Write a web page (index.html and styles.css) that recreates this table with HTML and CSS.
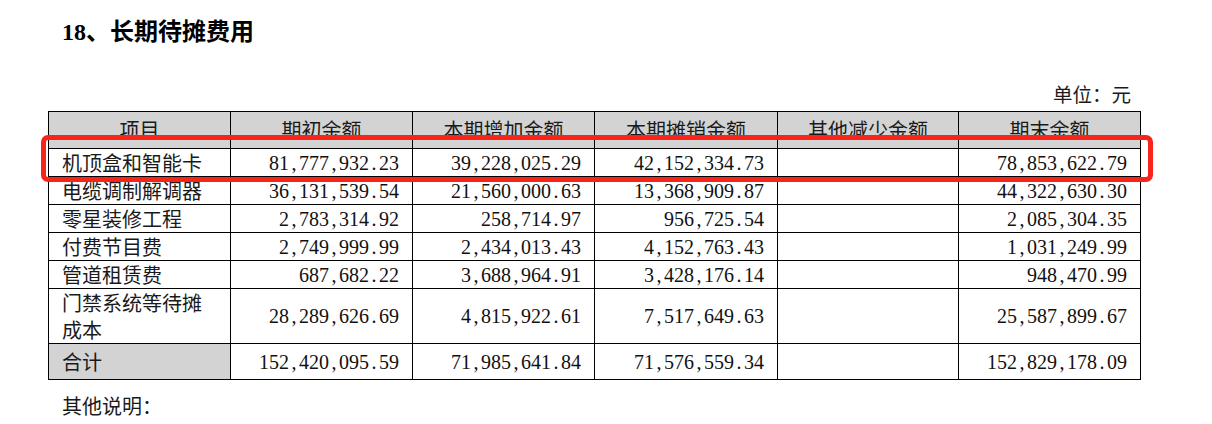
FILE: index.html
```html
<!DOCTYPE html>
<html lang="zh">
<head>
<meta charset="utf-8">
<link rel="stylesheet" href="styles.css">
</head>
<body>
<div class="page">
  <h1 class="title"><span class="lat">18</span>、长期待摊费用</h1>
  <div class="unit">单位：元</div>
  <table class="grid">
    <colgroup>
      <col class="c1"><col class="c2"><col class="c3"><col class="c4"><col class="c5"><col class="c6">
    </colgroup>
    <tr class="head">
      <th>项目</th><th>期初余额</th><th>本期增加金额</th><th>本期摊销金额</th><th>其他减少金额</th><th>期末余额</th>
    </tr>
    <tr class="r27">
      <td class="name">机顶盒和智能卡</td>
      <td class="num">81<span class="p">,</span>777<span class="p">,</span>932<span class="p">.</span>23</td>
      <td class="num">39<span class="p">,</span>228<span class="p">,</span>025<span class="p">.</span>29</td>
      <td class="num">42<span class="p">,</span>152<span class="p">,</span>334<span class="p">.</span>73</td>
      <td class="num"></td>
      <td class="num">78<span class="p">,</span>853<span class="p">,</span>622<span class="p">.</span>79</td>
    </tr>
    <tr class="r28">
      <td class="name">电缆调制解调器</td>
      <td class="num">36<span class="p">,</span>131<span class="p">,</span>539<span class="p">.</span>54</td>
      <td class="num">21<span class="p">,</span>560<span class="p">,</span>000<span class="p">.</span>63</td>
      <td class="num">13<span class="p">,</span>368<span class="p">,</span>909<span class="p">.</span>87</td>
      <td class="num"></td>
      <td class="num">44<span class="p">,</span>322<span class="p">,</span>630<span class="p">.</span>30</td>
    </tr>
    <tr class="r28">
      <td class="name">零星装修工程</td>
      <td class="num">2<span class="p">,</span>783<span class="p">,</span>314<span class="p">.</span>92</td>
      <td class="num">258<span class="p">,</span>714<span class="p">.</span>97</td>
      <td class="num">956<span class="p">,</span>725<span class="p">.</span>54</td>
      <td class="num"></td>
      <td class="num">2<span class="p">,</span>085<span class="p">,</span>304<span class="p">.</span>35</td>
    </tr>
    <tr class="r28">
      <td class="name">付费节目费</td>
      <td class="num">2<span class="p">,</span>749<span class="p">,</span>999<span class="p">.</span>99</td>
      <td class="num">2<span class="p">,</span>434<span class="p">,</span>013<span class="p">.</span>43</td>
      <td class="num">4<span class="p">,</span>152<span class="p">,</span>763<span class="p">.</span>43</td>
      <td class="num"></td>
      <td class="num">1<span class="p">,</span>031<span class="p">,</span>249<span class="p">.</span>99</td>
    </tr>
    <tr class="r28">
      <td class="name">管道租赁费</td>
      <td class="num">687<span class="p">,</span>682<span class="p">.</span>22</td>
      <td class="num">3<span class="p">,</span>688<span class="p">,</span>964<span class="p">.</span>91</td>
      <td class="num">3<span class="p">,</span>428<span class="p">,</span>176<span class="p">.</span>14</td>
      <td class="num"></td>
      <td class="num">948<span class="p">,</span>470<span class="p">.</span>99</td>
    </tr>
    <tr class="r54">
      <td class="name">门禁系统等待摊<br>成本</td>
      <td class="num">28<span class="p">,</span>289<span class="p">,</span>626<span class="p">.</span>69</td>
      <td class="num">4<span class="p">,</span>815<span class="p">,</span>922<span class="p">.</span>61</td>
      <td class="num">7<span class="p">,</span>517<span class="p">,</span>649<span class="p">.</span>63</td>
      <td class="num"></td>
      <td class="num">25<span class="p">,</span>587<span class="p">,</span>899<span class="p">.</span>67</td>
    </tr>
    <tr class="total">
      <td class="name shade">合计</td>
      <td class="num">152<span class="p">,</span>420<span class="p">,</span>095<span class="p">.</span>59</td>
      <td class="num">71<span class="p">,</span>985<span class="p">,</span>641<span class="p">.</span>84</td>
      <td class="num">71<span class="p">,</span>576<span class="p">,</span>559<span class="p">.</span>34</td>
      <td class="num"></td>
      <td class="num">152<span class="p">,</span>829<span class="p">,</span>178<span class="p">.</span>09</td>
    </tr>
  </table>
  <p class="note">其他说明：</p>
  <div class="highlight"></div>
</div>
</body>
</html>
```

FILE: styles.css
```css
* { box-sizing: border-box; }
html, body {
  margin: 0;
  padding: 0;
  background: #ffffff;
}
body {
  font-family: "Liberation Serif", "Noto Sans CJK SC", serif;
  color: #111111;
}
.page {
  position: relative;
  width: 1212px;
  height: 424px;
  padding-left: 48px;
  overflow: hidden;
}
.title {
  margin: 16px 0 0 14px;
  font-size: 24px;
  line-height: 32px;
  font-weight: 700;
  font-family: "Liberation Serif", "Noto Sans CJK SC", serif;
  color: #000000;
}
.title .lat {
  font-family: "Liberation Serif", serif;
  font-size: 24px;
}
.unit {
  width: 1092px;
  margin-top: 36px;
  padding-right: 9px;
  text-align: right;
  font-family: "Noto Sans CJK SC", sans-serif;
  font-size: 19.5px;
  line-height: 20px;
  color: #1a1a1a;
}
.grid {
  margin-top: 7px;
  border-collapse: collapse;
  table-layout: fixed;
  width: 1093px;
  font-size: 20px;
}
.c1 { width: 182px; }
.c2 { width: 182px; }
.c3 { width: 182px; }
.c4 { width: 183px; }
.c5 { width: 181px; }
.c6 { width: 182px; }
.grid th, .grid td {
  border: 1px solid #000000;
  padding: 0;
  vertical-align: middle;
}
.grid th {
  background: #d3d3d3;
  font-weight: 400;
  font-family: "Noto Sans CJK SC", sans-serif;
  color: #1a1a1a;
  text-align: center;
  height: 37px;
  line-height: 20px;
}
.r27 td { height: 27px; }
.r28 td { height: 28px; }
.r54 td { height: 54px; }
.total td { height: 36px; }
.name {
  font-family: "Noto Sans CJK SC", sans-serif;
  padding-left: 13px !important;
  line-height: 27px;
  color: #1a1a1a;
  white-space: nowrap;
}
.shade { background: #d3d3d3; }
.num {
  text-align: right;
  padding-right: 13px !important;
  font-family: "Liberation Serif", serif;
  line-height: 20px;
  color: #111111;
  white-space: nowrap;
}
.num .p {
  display: inline-block;
  width: 10px;
  text-align: center;
}
.note {
  margin: 16px 0 0 14px;
  font-family: "Noto Sans CJK SC", sans-serif;
  font-size: 20px;
  line-height: 20px;
  color: #1a1a1a;
}
.highlight {
  position: absolute;
  left: 41px;
  top: 135px;
  width: 1112px;
  height: 47px;
  border: 5.5px solid #f8241a;
  border-radius: 7px;
}
```
